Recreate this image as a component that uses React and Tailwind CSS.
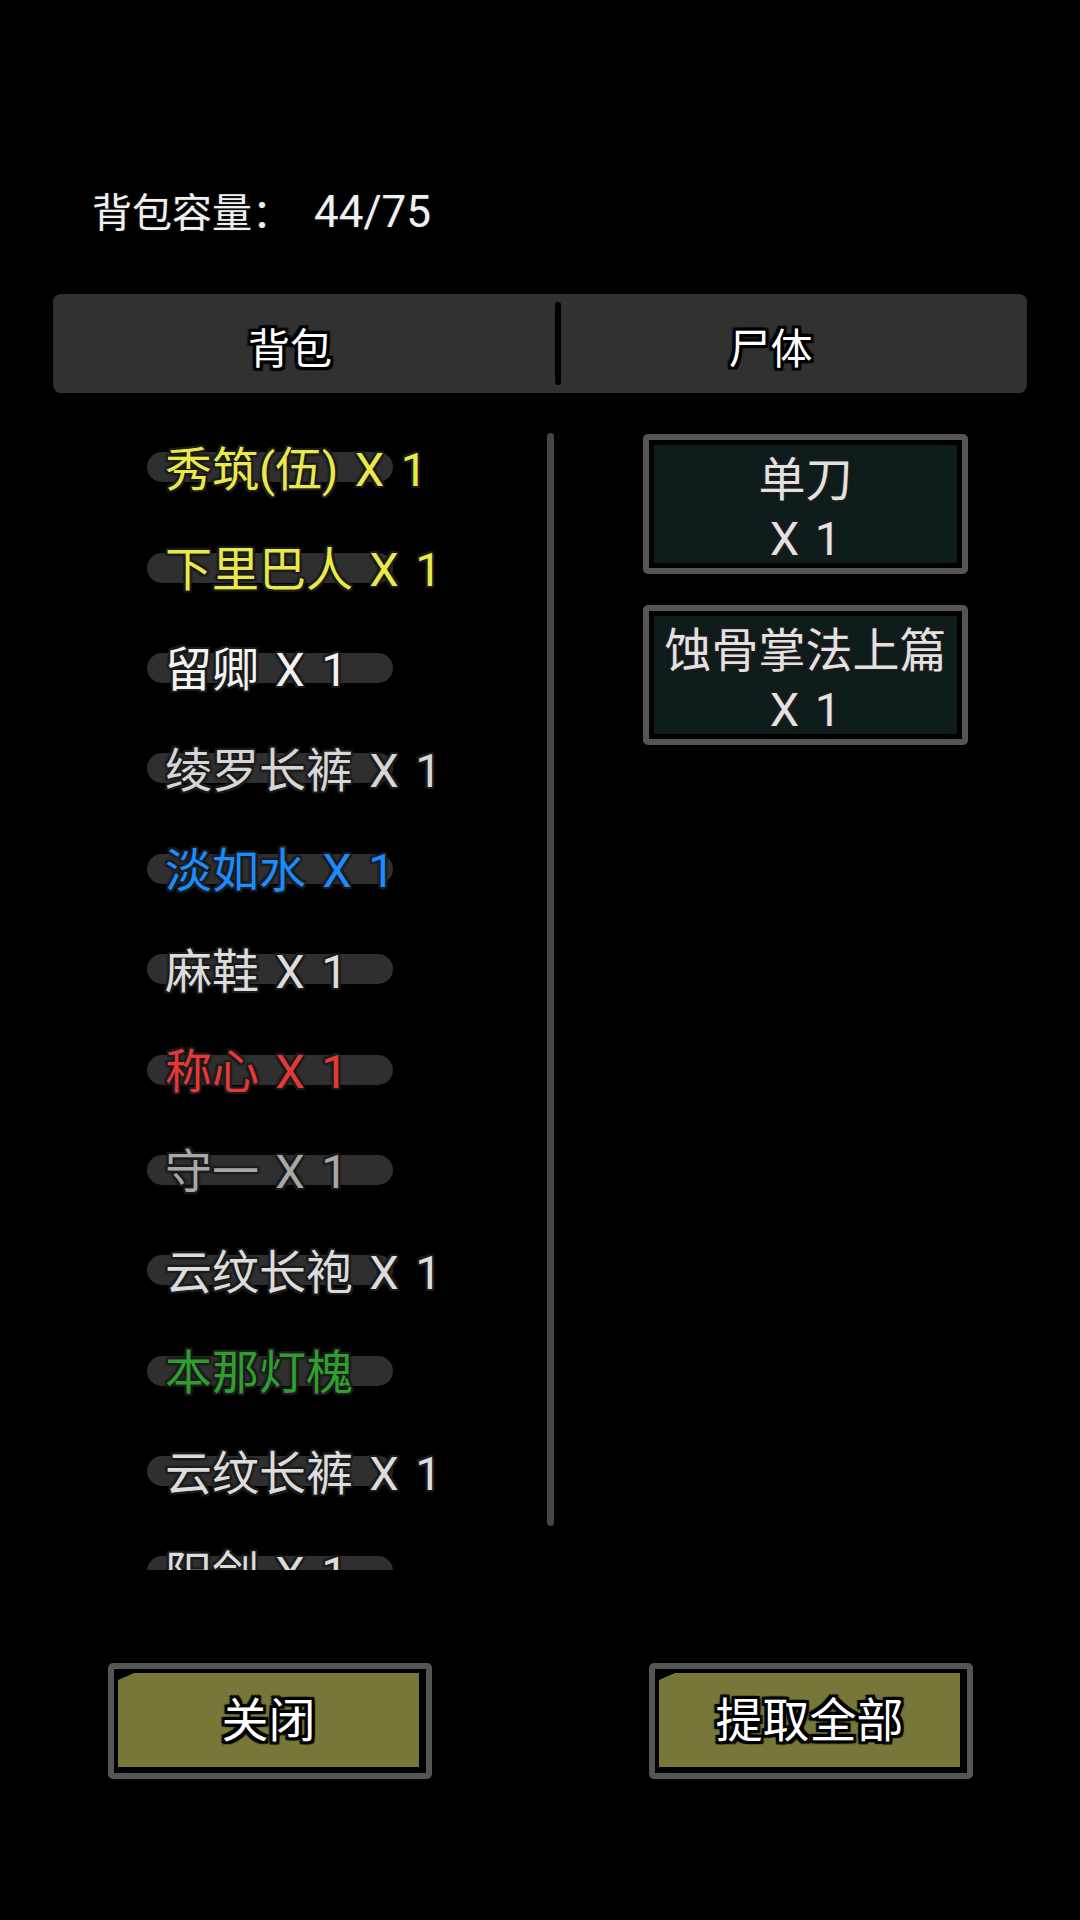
const items = [
  { name: '秀筑(伍) X 1', color: 'text-[#e9e94b]' },
  { name: '下里巴人 X 1', color: 'text-[#e9e94b]' },
  { name: '留卿 X 1', color: 'text-[#f2f2f2]' },
  { name: '绫罗长裤 X 1', color: 'text-[#d6d6d6]' },
  { name: '淡如水 X 1', color: 'text-[#1a8cff]' },
  { name: '麻鞋 X 1', color: 'text-[#dcdcdc]' },
  { name: '称心 X 1', color: 'text-[#e53838]' },
  { name: '守一 X 1', color: 'text-[#a8a8a8]' },
  { name: '云纹长袍 X 1', color: 'text-[#dcdcdc]' },
  { name: '本那灯槐', color: 'text-[#2f9e2f]' },
  { name: '云纹长裤 X 1', color: 'text-[#dcdcdc]' },
  { name: '阳剑 X 1', color: 'text-[#dcdcdc]' },
];

const corpse = [
  { name: '单刀', count: 'X 1' },
  { name: '蚀骨掌法上篇', count: 'X 1' },
];

const font = "font-['Roboto','Noto_Sans_CJK_SC',sans-serif]";
const softOutline =
  '[text-shadow:2px_2px_1px_#1c1c1c,-2px_-2px_1px_#1c1c1c,2px_-2px_1px_#1c1c1c,-2px_2px_1px_#1c1c1c,0_2px_1px_#1c1c1c,0_-2px_1px_#1c1c1c,2px_0_1px_#1c1c1c,-2px_0_1px_#1c1c1c]';
const hardOutline =
  '[text-shadow:3px_3px_1px_#000,-3px_-3px_1px_#000,3px_-3px_1px_#000,-3px_3px_1px_#000,0_3px_1px_#000,0_-3px_1px_#000,3px_0_1px_#000,-3px_0_1px_#000]';

function ActionButton({ label }) {
  return (
    <div className="w-[324px] h-[116px] rounded-[5px] border-[6px] border-[#555555] bg-black pt-[4px] pl-[4px] pr-[7px] pb-[6px]">
      <div className="h-full flex items-center justify-center bg-[#77773a] [clip-path:polygon(16px_0,100%_0,100%_100%,0_100%,0_7px)]">
        <span className={`text-[47px] leading-none text-white ${hardOutline}`}>{label}</span>
      </div>
    </div>
  );
}

export default function App() {
  return (
    <div className={`w-[1080px] h-[1920px] bg-black overflow-hidden ${font}`}>
      <div className="pt-[188px] pl-[92px] h-[233px] text-[40px] leading-[48px] text-[#f0f0f0] [text-shadow:0_0_2px_#333] flex items-baseline">
        <span>背包容量：</span>
        <span className="ml-[22px] text-[44px]">44/75</span>
      </div>

      <div className="mt-[61px] mx-[53px] h-[99px] rounded-[8px] bg-[#313131] flex items-center">
        <div className="w-[502px] flex justify-center pr-[28px] pt-[12px]">
          <span className={`text-[42px] leading-none text-white ${hardOutline}`}>背包</span>
        </div>
        <div className="w-[6px] h-[83px] rounded-full bg-black" />
        <div className="flex-1 flex justify-center pr-[47px] pt-[12px]">
          <span className={`text-[42px] leading-none text-white ${hardOutline}`}>尸体</span>
        </div>
      </div>

      <div className="mt-[26px] h-[1151px] flex">
        <div className="w-[547px] overflow-hidden pl-[147px]">
          {items.map((it) => (
            <div key={it.name} className="h-[100.4px] grid items-center">
              <div className="[grid-area:1/1] w-[246px] h-[30px] mb-[4px] rounded-full bg-[#2f2f2f]" />
              <div className={`[grid-area:1/1] relative pl-[18px] text-[47px] leading-none whitespace-nowrap [word-spacing:0.1em] ${it.color} ${softOutline}`}>
                {it.name}
              </div>
            </div>
          ))}
        </div>

        <div className="mt-[14px] w-[7px] h-[1093px] rounded-full bg-[#454545]" />

        <div className="pl-[89px] pt-[15px] flex flex-col gap-[31px]">
          {corpse.map((c) => (
            <div key={c.name} className="w-[325px] h-[140px] rounded-[5px] border-[6px] border-[#555555] bg-black p-[5px]">
              <div className={`h-full bg-[#0e1c1c] flex flex-col items-center justify-center pt-[10px] text-[47px] leading-[59px] text-[#e2e2e2] [word-spacing:0.08em] ${softOutline}`}>
                <span className="whitespace-nowrap">{c.name}</span>
                <span>{c.count}</span>
              </div>
            </div>
          ))}
        </div>
      </div>

      <div className="mt-[93px] pl-[108px] flex gap-[217px]">
        <ActionButton label="关闭" />
        <ActionButton label="提取全部" />
      </div>
    </div>
  );
}
